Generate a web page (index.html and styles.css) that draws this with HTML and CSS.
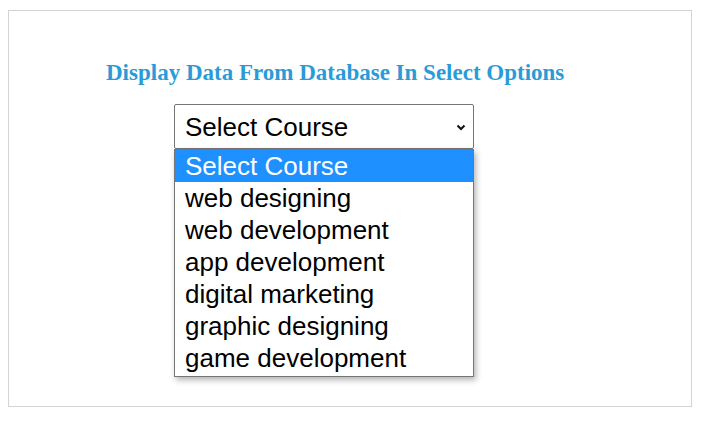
FILE: index.html
```html
<!DOCTYPE html>
<html>
<head>
<meta charset="utf-8">
<link rel="stylesheet" href="styles.css">
</head>
<body>
<div class="card">
  <h3 class="title">Display Data From Database In Select Options</h3>
  <div class="picker">
    <div class="select">
      <span>Select Course</span>
      <svg class="chev" width="10" height="7" viewBox="0 0 10 7"><path d="M1.5 1.5 L5 5 L8.5 1.5" fill="none" stroke="#111" stroke-width="2"/></svg>
    </div>
    <div class="list">
      <div class="opt active">Select Course</div>
      <div class="opt">web designing</div>
      <div class="opt">web development</div>
      <div class="opt">app development</div>
      <div class="opt">digital marketing</div>
      <div class="opt">graphic designing</div>
      <div class="opt">game development</div>
    </div>
  </div>
</div>
</body>
</html>
```
FILE: styles.css
```css
html, body { margin: 0; padding: 0; background: #fff; }
body { padding: 10px 15px 0 8px; }
.card {
  border: 1px solid #d4d4d4;
  box-sizing: border-box;
  width: 684px;
  height: 397px;
}
.title {
  margin: 49px 0 0 97px;
  font-family: "Liberation Serif", "Times New Roman", serif;
  font-weight: bold;
  font-size: 23px;
  color: #2b9bd7;
  line-height: 26px;
}
.picker {
  margin: 18px 0 0 165px;
  width: 300px;
  font-family: "Liberation Sans", Arial, sans-serif;
  font-size: 26px;
}
.select {
  box-sizing: border-box;
  height: 45px;
  border: 1px solid #767676;
  border-radius: 2px;
  display: flex;
  align-items: center;
  justify-content: space-between;
  padding: 2px 7px 0 10px;
  color: #000;
}
.list {
  border: 1px solid #767676;
  box-shadow: 2px 3px 6px rgba(0,0,0,0.3);
  background: #fff;
  padding-bottom: 2px;
}
.opt {
  height: 32px;
  line-height: 32px;
  padding-left: 10px;
  color: #000;
}
.opt.active { background: #1e90ff; color: #fff; }
```
